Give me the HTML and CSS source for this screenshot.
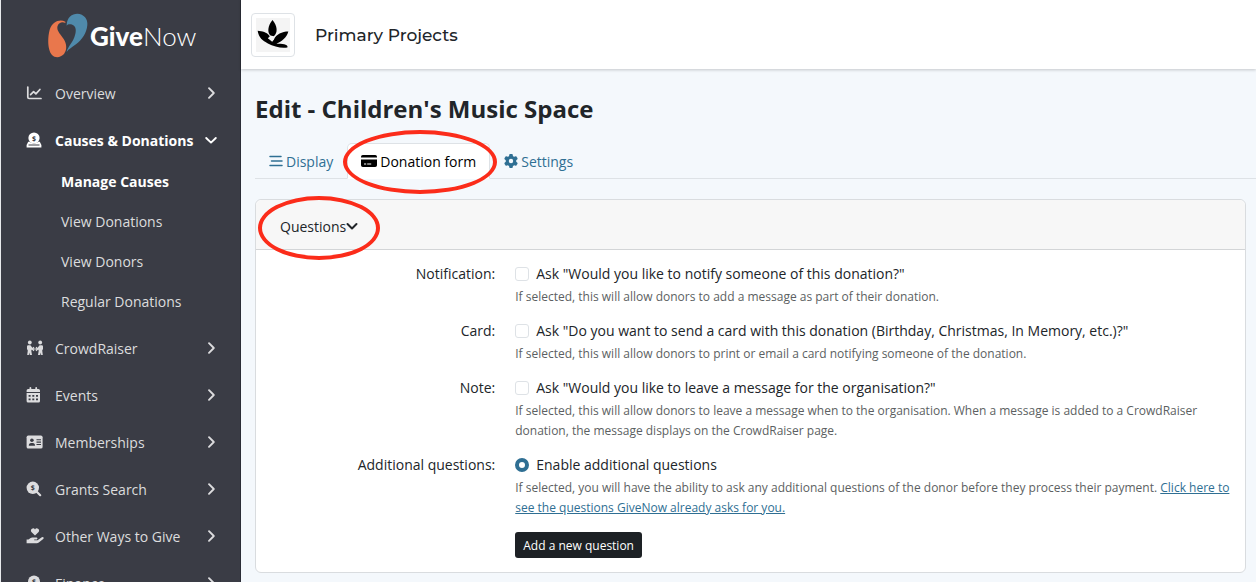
FILE: index.html
```html
<!DOCTYPE html>
<html lang="en">
  <head>
    <meta charset="UTF-8" />
    <meta name="viewport" content="width=device-width, initial-scale=1.0" />
    <title>Edit - Children's Music Space</title>
    <link rel="stylesheet" href="styles.css">
  </head>
  <body>
    <svg class="sprite" aria-hidden="true">
      <symbol id="right" viewBox="0 0 16 16"><path d="M6 3.2 10.8 8 6 12.8" fill="none" stroke="currentColor" stroke-width="1.9" stroke-linecap="round" stroke-linejoin="round" /></symbol>
      <symbol id="down" viewBox="0 0 16 16"><path d="M3.2 6 8 10.6 12.8 6" fill="none" stroke="currentColor" stroke-width="1.9" stroke-linecap="round" stroke-linejoin="round" /></symbol>
    </svg>
    <aside class="sidebar">
      <a class="brand" href="#">
        <svg class="brand-mark" viewBox="146 38 120 135" aria-hidden="true">
          <path fill="#e9774c" d="M198 64C182 56 160 62 151 88C144 115 145 150 158 164C168 174 184 172 194 161C203 149 203 131 193 116C183 101 170 90 175 76C178 67 189 63 198 68Z" />
          <path fill="#4f8aab" d="M202 74C203 50 218 40 234 40C254 41 266 56 264 74C262 98 248 118 230 132C216 143 207 147 202 155C205 140 218 130 225 111C232 92 231 77 219 73C211 71 205 72 202 76Z" />
        </svg>
        <span class="brand-name"><b>Give</b>Now</span>
      </a>
      <nav>
        <ul class="menu">
          <li>
            <a href="#">
              <svg class="icon" viewBox="0 0 16 16"><path d="M1.8 2v10.2q0 1.3 1.3 1.3H15M4.6 9.6l3-3 2.3 2.3 4-4.4" fill="none" stroke="currentColor" stroke-width="1.7" stroke-linecap="round" stroke-linejoin="round" /></svg>
              Overview
              <svg class="chevron"><use href="#right" /></svg>
            </a>
          </li>
          <li>
            <a class="open" href="#">
              <svg class="icon" viewBox="0 0 16 16"><circle cx="8" cy="6" r="5.6" /><path d="M2.2 9.8h1.4A6.6 6.6 0 0 0 12.400 9.8h1.4L15.400 13v2.400H.6V13z" /><path d="M2.500 13h11" stroke="#3a3c45" stroke-width="1" /><text x="8" y="8.500" class="coin">$</text></svg>
              Causes &amp; Donations
              <svg class="chevron"><use href="#down" /></svg>
            </a>
            <ul class="submenu">
              <li><a class="current" href="#">Manage Causes</a></li>
              <li><a href="#">View Donations</a></li>
              <li><a href="#">View Donors</a></li>
              <li><a href="#">Regular Donations</a></li>
            </ul>
          </li>
          <li>
            <a href="#">
              <svg class="icon wide" viewBox="0 0 18 16"><circle cx="3.8" cy="2.5" r="1.9" /><circle cx="14.2" cy="2.5" r="1.9" /><path d="M1 6.4Q1 5.2 2.2 5.2H4.4L7 8.6 6 10 5.4 9.4V11.5L6 15H3.8L3.4 12.4 2.8 15H1.2L1.8 10.5 1 9zM17 6.4Q17 5.2 15.8 5.2H13.6L11 8.6 12 10 12.6 9.4V11.5L12 15H14.2L14.6 12.4 15.2 15H16.8L16.2 10.5 17 9z" /><path d="M5.5 9H12.5M8 7.2 6.2 9 8 10.8M10 7.2 11.8 9 10 10.8" fill="none" stroke="currentColor" stroke-width="1.2" /></svg>
              CrowdRaiser
              <svg class="chevron"><use href="#right" /></svg>
            </a>
          </li>
          <li>
            <a href="#">
              <svg class="icon" viewBox="0 0 16 16"><path fill-rule="evenodd" d="M3.5 1a.9.9 0 0 1 1.8 0v1h4V1a.9.9 0 0 1 1.8 0v1h1.4q1.5 0 1.5 1.5V5H.6V3.5Q.6 2 2.1 2h1.4zM.6 6H14v8q0 1.5-1.5 1.5H2.1Q.6 15.500.6 14zM2.600 8v1.800h2V8zM6.300 8v1.800h2V8zM10 8v1.800h2V8zM2.600 11.500v1.800h2v-1.800zM6.300 11.500v1.800h2v-1.800zM10 11.500v1.800h2v-1.800z" /></svg>
              Events
              <svg class="chevron"><use href="#right" /></svg>
            </a>
          </li>
          <li>
            <a href="#">
              <svg class="icon wide" viewBox="0 0 18 16"><rect x=".6" y="1.600" width="16" height="13" rx="1.700" /><g fill="#3a3c45"><circle cx="5.900" cy="6.300" r="1.800" /><path d="M2.800 11.700Q2.800 9 5.100 9h1.600Q9 9 9 11.700zM10.500 5.200h4.500v1.100H10.500zM10.500 7.600h4.500v1.100H10.500zM10.500 10h4.500v1.100H10.500z" /></g></svg>
              Memberships
              <svg class="chevron"><use href="#right" /></svg>
            </a>
          </li>
          <li>
            <a href="#">
              <svg class="icon" viewBox="0 0 16 16"><circle cx="6.800" cy="6.800" r="6.200" /><path d="M10.500 10.500 14.200 14.200" stroke="currentColor" stroke-width="2.200" stroke-linecap="round" /><text x="6.800" y="9.400" class="coin">$</text></svg>
              Grants Search
              <svg class="chevron"><use href="#right" /></svg>
            </a>
          </li>
          <li>
            <a href="#">
              <svg class="icon wide" viewBox="0 0 18 16"><path d="M9 7.500 5.400 3.900A2.150 2.150 0 0 1 9 1.400a2.150 2.150 0 0 1 3.600 2.500zM.6 11.500H2.500L4.600 9.900Q5.300 9.400 6.200 9.400H10.500Q11.600 9.600 11.400 10.700 11.100 11.600 10.200 11.600H8.200V12.200H11.500L15.800 9.200Q17 8.700 17.600 9.600 17.900 10.500 17.200 11.100L12.800 14.600Q11.900 15.300 10.800 15.300H.6z" /></svg>
              Other Ways to Give
              <svg class="chevron"><use href="#right" /></svg>
            </a>
          </li>
          <li>
            <a href="#">
              <svg class="icon" viewBox="0 0 16 16"><circle cx="8" cy="6.600" r="6" /><path d="M2 11h12l1.400 4H.6z" /><text x="8" y="9.200" class="coin">$</text></svg>
              Finance
              <svg class="chevron"><use href="#right" /></svg>
            </a>
          </li>
        </ul>
      </nav>
    </aside>

    <div class="page">
      <header class="topbar">
        <div class="org-logo">
          <svg viewBox="48 51 103 103" aria-hidden="true">
            <path d="M98 57C83 75 82 96 92 104L102 106C115 96 113 75 98 57ZM53 90C56 110 68 121 84 128C102 138 125 143 143 140C147 133 132 128 110 129C126 122 141 111 146 92C127 92 109 100 102 117L96 122 84 112 90 106C80 94 67 91 53 90Z" />
            <path fill="#f4f4f4" d="M86 113C88 107 95 103 101 107C103 112 101 119 97 123C96 117 91 113 86 113Z" />
          </svg>
        </div>
        <span class="org-name">Primary Projects</span>
      </header>

      <main>
        <h1>Edit - Children's Music Space</h1>
        <nav class="tabs">
          <a href="#">
            <svg class="tab-icon" viewBox="0 0 14 14"><path d="M1 2.500H12M2.500 7H13M1 11.500H13" stroke="currentColor" stroke-width="1.500" stroke-linecap="round" /></svg>
            Display
          </a>
          <a class="active marked" href="#">
            <svg class="tab-icon card-icon" viewBox="0 0 16 14"><path fill-rule="evenodd" d="M1.800 1H14.200Q16 1 16 2.800V3.600H0V2.800Q0 1 1.800 1zM0 5.600H16V11.200Q16 13 14.200 13H1.800Q0 13 0 11.200zM3 9.400v1h2.200v-1zM6.200 9.400v1h4v-1z" /></svg>
            Donation form
          </a>
          <a href="#">
            <svg class="tab-icon" viewBox="0 0 512 512"><path d="M495.9 166.6c3.2 8.7 .5 18.4-6.4 24.6l-43.3 39.4c1.1 8.3 1.7 16.8 1.7 25.4s-.6 17.1-1.7 25.4l43.3 39.4c6.900 6.200 9.600 15.900 6.400 24.600c-4.400 11.900-9.700 23.300-15.800 34.300l-4.700 8.100c-6.600 11-14 21.400-22.100 31.200c-5.900 7.200-15.700 9.600-24.500 6.800l-55.700-17.700c-13.400 10.300-28.200 18.900-44 25.400l-12.500 57.100c-2 9.100-9 16.300-18.200 17.800c-13.800 2.300-28 3.500-42.500 3.500s-28.700-1.200-42.500-3.500c-9.200-1.500-16.200-8.700-18.200-17.800l-12.500-57.100c-15.800-6.500-30.600-15.100-44-25.400L83.100 425.900c-8.800 2.800-18.600 .3-24.500-6.800c-8.100-9.800-15.500-20.200-22.100-31.200l-4.700-8.100c-6.100-11-11.400-22.400-15.800-34.300c-3.200-8.700-.5-18.400 6.400-24.600l43.300-39.400C64.600 273.100 64 264.600 64 256s.6-17.100 1.700-25.400L22.400 191.200c-6.900-6.200-9.600-15.900-6.400-24.600c4.400-11.900 9.700-23.300 15.800-34.300l4.700-8.100c6.600-11 14-21.400 22.100-31.200c5.900-7.200 15.700-9.600 24.500-6.800l55.700 17.700c13.400-10.300 28.200-18.900 44-25.400l12.500-57.100c2-9.100 9-16.300 18.200-17.800C227.300 1.200 241.500 0 256 0s28.700 1.200 42.500 3.500c9.200 1.500 16.200 8.700 18.200 17.800l12.500 57.100c15.800 6.500 30.600 15.100 44 25.400l55.700-17.700c8.800-2.800 18.600-.3 24.500 6.800c8.100 9.800 15.500 20.200 22.100 31.200l4.700 8.100c6.100 11 11.400 22.400 15.800 34.300zM256 336a80 80 0 1 0 0-160 80 80 0 1 0 0 160z" /></svg>
            Settings
          </a>
        </nav>

        <form class="panel">
          <div class="panel-header">
            <button type="button" class="toggle marked">Questions<svg class="toggle-icon" viewBox="0 0 12 12"><path d="M1.500 4 6 8.500 10.500 4" fill="none" stroke="currentColor" stroke-width="2" stroke-linecap="round" stroke-linejoin="round" /></svg></button>
          </div>
          <div class="panel-body">
            <div class="row">
              <div class="row-label">Notification:</div>
              <div>
                <label class="option"><input type="checkbox" name="notify" />Ask "Would you like to notify someone of this donation?"</label>
                <p class="help">If selected, this will allow donors to add a message as part of their donation.</p>
              </div>
            </div>
            <div class="row">
              <div class="row-label">Card:</div>
              <div>
                <label class="option"><input type="checkbox" name="card" />Ask "Do you want to send a card with this donation (Birthday, Christmas, In Memory, etc.)?"</label>
                <p class="help">If selected, this will allow donors to print or email a card notifying someone of the donation.</p>
              </div>
            </div>
            <div class="row">
              <div class="row-label">Note:</div>
              <div>
                <label class="option"><input type="checkbox" name="note" />Ask "Would you like to leave a message for the organisation?"</label>
                <p class="help">If selected, this will allow donors to leave a message when to the organisation. When a message is added to a CrowdRaiser donation, the message displays on the CrowdRaiser page.</p>
              </div>
            </div>
            <div class="row">
              <div class="row-label">Additional questions:</div>
              <div>
                <label class="option"><input type="radio" name="additional" checked />Enable additional questions</label>
                <p class="help">If selected, you will have the ability to ask any additional questions of the donor before they process their payment. <a href="#">Click here to see the questions GiveNow already asks for you.</a></p>
                <button type="button" class="add">Add a new question</button>
              </div>
            </div>
          </div>
        </form>
      </main>
    </div>
  </body>
</html>
```
FILE: styles.css
```css
* {
  box-sizing: border-box;
}

body {
  margin: 0;
  display: flex;
  height: 100vh;
  overflow: hidden;
  font-family: "Open Sans", "Noto Sans", sans-serif;
  font-size: 14px;
  color: #212529;
  background: #f4f8fc;
}

ul {
  list-style: none;
  margin: 0;
  padding: 0;
}

a {
  color: #2f6f93;
}

svg {
  fill: currentColor;
  flex: none;
}

.sprite {
  position: absolute;
  width: 0;
  height: 0;
}

/* sidebar */
.sidebar {
  flex: 0 0 241px;
  overflow: hidden;
  background: #3a3c45;
  border-left: 1px solid #e8eaec;
  border-right: 1px solid #2b2d36;
}

.brand {
  display: flex;
  align-items: center;
  gap: 2px;
  height: 60px;
  padding: 10px 0 0 47px;
  margin-bottom: 13px;
  color: #fff;
  text-decoration: none;
}

.brand-mark {
  width: 40px;
  height: 45px;
}

.brand-name {
  padding-top: 2px;
  font-family: Lato, sans-serif;
  font-size: 26px;
  font-weight: 300;
}

.brand-name b {
  font-weight: 900;
}

.menu > li {
  margin-bottom: 7px;
}

.menu a {
  display: flex;
  align-items: center;
  height: 40px;
  padding: 0 21px 0 25px;
  color: #dcdcde;
  text-decoration: none;
}

.menu a.open,
.menu a.current {
  color: #fff;
  font-weight: 700;
}

.icon {
  width: 16px;
  height: 16px;
  margin-right: 13px;
}

.icon.wide {
  width: 18px;
  margin-right: 11px;
}

.chevron {
  width: 16px;
  height: 16px;
  margin-left: auto;
}

.coin {
  font-size: 7px;
  font-weight: 700;
  text-anchor: middle;
  fill: #3a3c45;
}

.submenu {
  margin-top: 1px;
}

.menu .submenu a {
  padding-left: 60px;
}

/* page */
.page {
  flex: 1;
  min-width: 0;
}

.topbar {
  display: flex;
  align-items: center;
  gap: 20px;
  height: 69px;
  padding: 0 10px;
  background: #fff;
  box-shadow: 0 1px 3px rgba(0, 0, 0, 0.2);
}

.org-logo {
  width: 44px;
  height: 44px;
  padding: 4px;
  border: 1px solid #dee2e6;
  border-radius: 4px;
}

.org-logo svg {
  display: block;
  width: 34px;
  height: 34px;
  background: #f4f4f4;
  fill: #000;
}

.org-name {
  font-family: Montserrat, Inter, sans-serif;
  font-size: 17px;
  font-weight: 500;
}

main {
  padding: 24px 0 0 14px;
}

h1 {
  margin: 0 0 18px;
  font-size: 24px;
  line-height: 32px;
}

.tabs {
  display: flex;
  margin-bottom: 20px;
  border-bottom: 1px solid #dee2e6;
}

.tabs a {
  display: flex;
  align-items: center;
  gap: 3px;
  height: 36px;
  margin-bottom: -1px;
  padding: 0 13px;
  border: 1px solid transparent;
  border-radius: 5px 5px 0 0;
  text-decoration: none;
}

.tabs a.active {
  color: #000;
  background: #fff;
  border-color: #dee2e6 #dee2e6 #fff;
}

.tab-icon {
  width: 14px;
  height: 14px;
}

.card-icon {
  width: 16px;
}

/* red rings around the steps to follow */
.marked {
  position: relative;
}

.marked::after {
  content: "";
  position: absolute;
  inset: -14px -8px -16px -5px;
  border: 4px solid #fb2c1a;
  border-radius: 50%;
  pointer-events: none;
}

.toggle.marked::after {
  inset: -19px -22px -23px;
}

/* questions panel */
.panel {
  margin-right: 10px;
  background: #fff;
  border: 1px solid #d9dcdf;
  border-radius: 6px;
}

.panel-header {
  display: flex;
  align-items: center;
  height: 50px;
  padding: 3px 24px 0;
  background: #f7f7f7;
  border-bottom: 1px solid #d3d5d7;
  border-radius: 6px 6px 0 0;
}

.toggle {
  display: flex;
  align-items: center;
  height: 22px;
  padding: 0;
  border: 0;
  background: none;
  color: inherit;
  font: inherit;
}

.toggle-icon {
  width: 12px;
  height: 12px;
}

.panel-body {
  padding: 11px 12px 14px 0;
}

.row {
  display: grid;
  grid-template-columns: 1fr 3fr;
  gap: 20px;
}

.row + .row {
  margin-top: 11px;
}

.row-label {
  text-align: right;
  line-height: 26px;
}

.option {
  display: flex;
  align-items: center;
  gap: 7px;
  line-height: 26px;
}

.option input {
  appearance: none;
  width: 14px;
  height: 14px;
  margin: 0;
  background: #fff;
  border: 1px solid #dee2e6;
  border-radius: 3px;
}

.option input[type="radio"] {
  border-radius: 50%;
}

.option input[type="radio"]:checked {
  border: 4px solid #2f6f93;
}

.help {
  margin: 0;
  font-size: 12px;
  line-height: 20px;
  color: #5c5f62;
}

.add {
  height: 26px;
  margin-top: 14px;
  padding: 0 8px;
  border: 0;
  border-radius: 3px;
  background: #1d2125;
  color: #fff;
  font: inherit;
  font-size: 12px;
}
```
